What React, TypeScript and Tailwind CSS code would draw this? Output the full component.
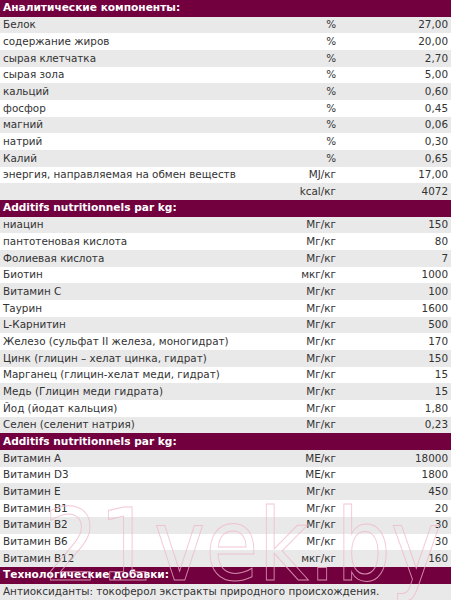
import React from "react";

type Row = [string, string, string];

type Section = { title: string; rows: Row[] };

const SECTIONS: Section[] = [
  {
    title: "Аналитические компоненты:",
    rows: [
      ["Белок", "%", "27,00"],
      ["содержание жиров", "%", "20,00"],
      ["сырая клетчатка", "%", "2,70"],
      ["сырая зола", "%", "5,00"],
      ["кальций", "%", "0,60"],
      ["фосфор", "%", "0,45"],
      ["магний", "%", "0,06"],
      ["натрий", "%", "0,30"],
      ["Калий", "%", "0,65"],
      ["энергия, направляемая на обмен веществ", "MJ/кг", "17,00"],
      ["", "kcal/кг", "4072"],
    ],
  },
  {
    title: "Additifs nutritionnels par kg:",
    rows: [
      ["ниацин", "Мг/кг", "150"],
      ["пантотеновая кислота", "Мг/кг", "80"],
      ["Фолиевая кислота", "Мг/кг", "7"],
      ["Биотин", "мкг/кг", "1000"],
      ["Витамин C", "Мг/кг", "100"],
      ["Таурин", "Мг/кг", "1600"],
      ["L-Карнитин", "Мг/кг", "500"],
      ["Железо (сульфат II железа, моногидрат)", "Мг/кг", "170"],
      ["Цинк (глицин – хелат цинка, гидрат)", "Мг/кг", "150"],
      ["Марганец (глицин-хелат меди, гидрат)", "Мг/кг", "15"],
      ["Медь (Глицин меди гидрата)", "Мг/кг", "15"],
      ["Йод (йодат кальция)", "Мг/кг", "1,80"],
      ["Селен (селенит натрия)", "Мг/кг", "0,23"],
    ],
  },
  {
    title: "Additifs nutritionnels par kg:",
    rows: [
      ["Витамин A", "МЕ/кг", "18000"],
      ["Витамин D3", "МЕ/кг", "1800"],
      ["Витамин E", "Мг/кг", "450"],
      ["Витамин B1", "Мг/кг", "20"],
      ["Витамин B2", "Мг/кг", "30"],
      ["Витамин B6", "Мг/кг", "30"],
      ["Витамин B12", "мкг/кг", "160"],
    ],
  },
];

export default function App() {
  return (
    <div
      className="relative w-[451px] h-[600px] overflow-hidden bg-white text-[10.4px] text-[#333333]"
      style={{ fontFamily: '"DejaVu Sans", Verdana, sans-serif' }}
    >
      <div className="flex flex-col h-full">
        {SECTIONS.map((section, si) => (
          <React.Fragment key={si}>
            <div className="flex-1 flex items-center pl-[3px] bg-[#72003f] text-white font-bold text-[10.6px]">
              {section.title}
            </div>
            {section.rows.map(([name, unit, value], ri) => (
              <div
                key={ri}
                className={`flex-1 flex items-center ${ri % 2 === 0 ? "bg-[#e9e9e9]" : "bg-white"}`}
              >
                <div className="flex-1 min-w-0 pl-[3px] whitespace-nowrap">{name}</div>
                <div className="w-[100px] shrink-0 text-right">{unit}</div>
                <div className="w-[115px] shrink-0 pr-[3px] text-right">{value}</div>
              </div>
            ))}
          </React.Fragment>
        ))}
        {/* технологические добавки */}
        <div className="flex-1 flex items-center pl-[3px] bg-[#72003f] text-white font-bold text-[10.6px]">
          Технологические добавки:
        </div>
        <div className="flex-1 flex items-center pl-[3px] bg-[#e9e9e9] whitespace-nowrap">
          Антиоксиданты: токоферол экстракты природного происхождения.
        </div>
      </div>

      {/* водяной знак */}
      <svg
        className="absolute left-0 top-0 pointer-events-none"
        width="451"
        height="600"
        viewBox="0 0 451 600"
        aria-hidden="true"
      >
        <text
          x="44"
          y="580"
          fontSize="100"
          textLength="398"
          lengthAdjust="spacingAndGlyphs"
          fill="none"
          stroke="#f2b6ca"
          strokeWidth="1"
          opacity="0.75"
          style={{ fontFamily: '"DejaVu Sans", sans-serif' }}
        >
          21vek.by
        </text>
      </svg>
    </div>
  );
}
